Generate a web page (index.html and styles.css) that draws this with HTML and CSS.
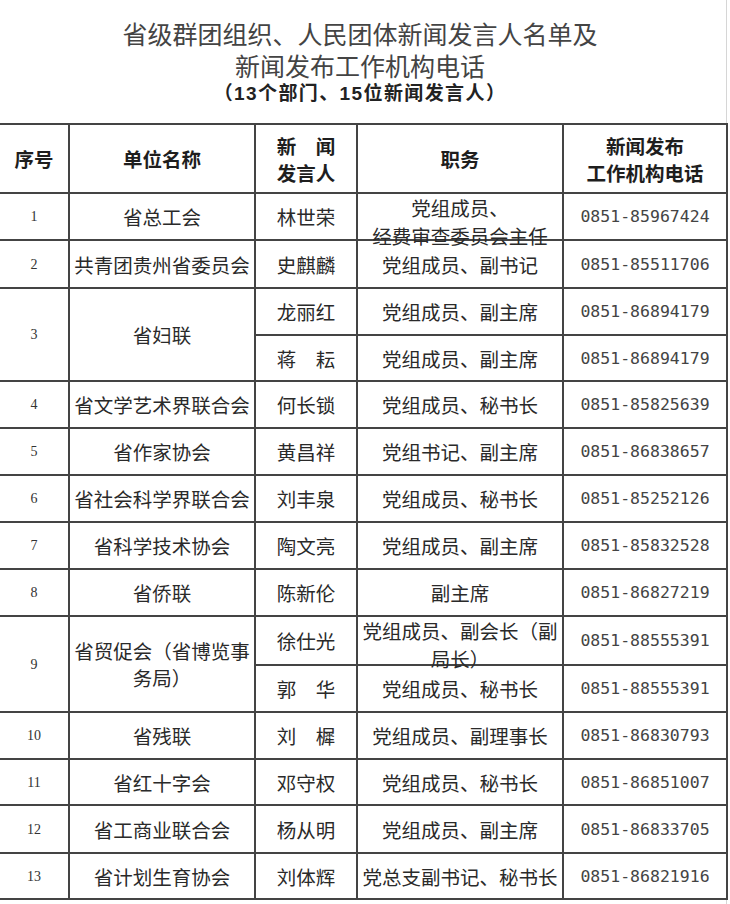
FILE: index.html
```html
<!DOCTYPE html>
<html lang="zh-CN">
<head>
<meta charset="utf-8">
<title>省级群团组织、人民团体新闻发言人名单</title>
<link rel="stylesheet" href="styles.css">
</head>
<body>
<div class="page">
  <header class="title">
    <h1 class="t1">省级群团组织、人民团体新闻发言人名单及</h1>
    <h1 class="t2">新闻发布工作机构电话</h1>
    <p class="t3">（13个部门、15位新闻发言人）</p>
  </header>
  <table class="roster">
    <colgroup>
      <col class="c-no">
      <col class="c-org">
      <col class="c-name">
      <col class="c-duty">
      <col class="c-tel">
    </colgroup>
    <thead>
      <tr class="hdr">
        <th class="first">序号</th>
        <th>单位名称</th>
        <th>新　闻<br>发言人</th>
        <th>职务</th>
        <th>新闻发布<br>工作机构电话</th>
      </tr>
    </thead>
    <tbody>
      <tr>
        <td class="no first">1</td><td>省总工会</td><td>林世荣</td>
        <td class="top"><div class="clip">党组成员、<br>经费审查委员会主任</div></td>
        <td class="tel">0851-85967424</td>
      </tr>
      <tr class="h48">
        <td class="no first">2</td><td>共青团贵州省委员会</td><td>史麒麟</td><td>党组成员、副书记</td><td class="tel">0851-85511706</td>
      </tr>
      <tr>
        <td class="no first" rowspan="2">3</td><td rowspan="2">省妇联</td><td>龙丽红</td><td>党组成员、副主席</td><td class="tel">0851-86894179</td>
      </tr>
      <tr class="h46">
        <td>蒋　耘</td><td>党组成员、副主席</td><td class="tel">0851-86894179</td>
      </tr>
      <tr>
        <td class="no first">4</td><td>省文学艺术界联合会</td><td>何长锁</td><td>党组成员、秘书长</td><td class="tel">0851-85825639</td>
      </tr>
      <tr>
        <td class="no first">5</td><td>省作家协会</td><td>黄昌祥</td><td>党组书记、副主席</td><td class="tel">0851-86838657</td>
      </tr>
      <tr>
        <td class="no first">6</td><td>省社会科学界联合会</td><td>刘丰泉</td><td>党组成员、秘书长</td><td class="tel">0851-85252126</td>
      </tr>
      <tr>
        <td class="no first">7</td><td>省科学技术协会</td><td>陶文亮</td><td>党组成员、副主席</td><td class="tel">0851-85832528</td>
      </tr>
      <tr>
        <td class="no first">8</td><td>省侨联</td><td>陈新伦</td><td>副主席</td><td class="tel">0851-86827219</td>
      </tr>
      <tr class="h49">
        <td class="no first" rowspan="2">9</td><td rowspan="2">省贸促会（省博览事<br>务局）</td><td>徐仕光</td>
        <td class="top"><div class="clip">党组成员、副会长（副<br>局长）</div></td>
        <td class="tel">0851-88555391</td>
      </tr>
      <tr>
        <td>郭　华</td><td>党组成员、秘书长</td><td class="tel">0851-88555391</td>
      </tr>
      <tr>
        <td class="no first">10</td><td>省残联</td><td>刘　樨</td><td>党组成员、副理事长</td><td class="tel">0851-86830793</td>
      </tr>
      <tr class="h46">
        <td class="no first">11</td><td>省红十字会</td><td>邓守权</td><td>党组成员、秘书长</td><td class="tel">0851-86851007</td>
      </tr>
      <tr class="h48">
        <td class="no first">12</td><td>省工商业联合会</td><td>杨从明</td><td>党组成员、副主席</td><td class="tel">0851-86833705</td>
      </tr>
      <tr class="h46">
        <td class="no first">13</td><td>省计划生育协会</td><td>刘体辉</td><td>党总支副书记、秘书长</td><td class="tel">0851-86821916</td>
      </tr>
    </tbody>
  </table>
</div>
</body>
</html>
```

FILE: styles.css
```css
html, body {
  margin: 0;
  padding: 0;
  background: #fff;
}

body {
  font-family: "Noto Sans CJK SC", "Noto Sans", sans-serif;
  color: #222;
}

.page {
  width: 726px;
  min-height: 904px;
  border-right: 1px solid #d6d6d6;
}

.title {
  box-sizing: border-box;
  width: 720px;
  height: 123px;
  padding-top: 19px;
  text-align: center;
  font-family: "Liberation Sans", "Noto Sans CJK SC", sans-serif;
}

.t1,
.t2 {
  margin: 0;
  font-size: 25px;
  font-weight: 400;
  line-height: 32px;
  color: #444;
}

.t3 {
  margin: 0;
  font-size: 19px;
  font-weight: 700;
  line-height: 22px;
  letter-spacing: 1.4px;
  color: #222;
}

.roster {
  border-collapse: collapse;
  table-layout: fixed;
  width: 727px;
}

.c-no { width: 69px; }
.c-org { width: 186px; }
.c-name { width: 102px; }
.c-duty { width: 206px; }
.c-tel { width: 164px; }

.roster th,
.roster td {
  border: 2px solid #444;
  padding: 0 3px;
  text-align: center;
  vertical-align: middle;
  font-size: 19.5px;
  line-height: 27px;
  color: #2a2a2a;
  overflow: visible;
}

.roster .first {
  border-left: none;
}

.roster th {
  font-weight: 700;
  color: #1e1e1e;
}

.roster tr {
  height: 47px;
}

.roster tr.hdr { height: 69px; }
.roster tr.h46 { height: 46px; }
.roster tr.h48 { height: 48px; }
.roster tr.h49 { height: 49px; }

.roster td.no {
  font-family: "Liberation Serif", serif;
  font-size: 14px;
  color: #333;
}

.roster td.tel {
  font-family: "DejaVu Sans Mono", "Liberation Mono", monospace;
  font-size: 16.5px;
  color: #444;
}

.roster td.top {
  vertical-align: top;
}

.clip {
  height: 40px;
  line-height: 28px;
  white-space: nowrap;
}
```
